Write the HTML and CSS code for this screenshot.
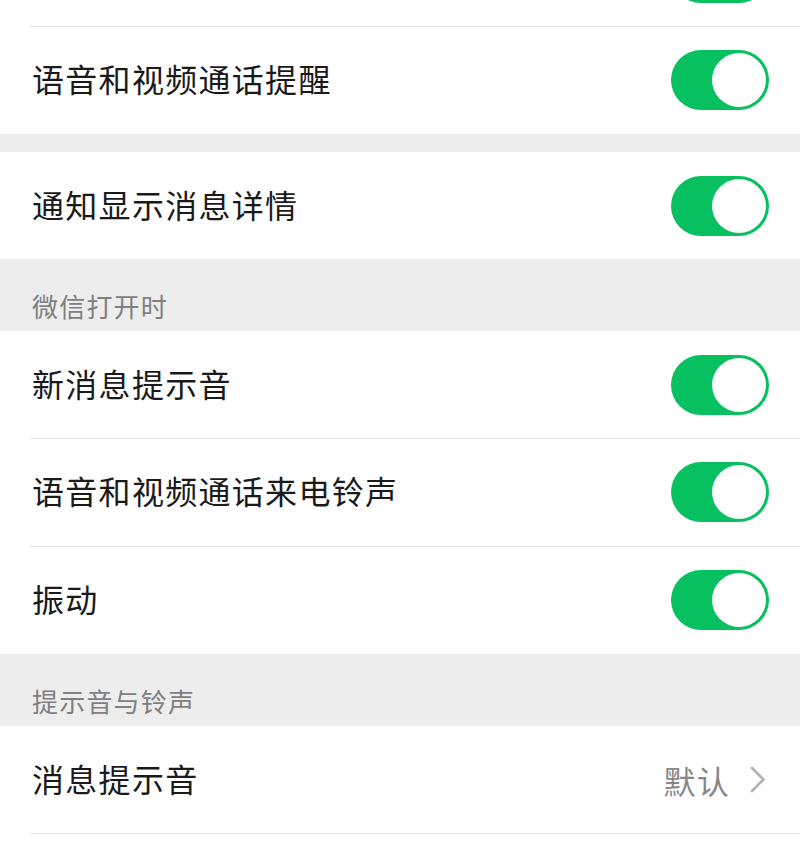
FILE: index.html
```
<!DOCTYPE html>
<html lang="zh-CN">
<head>
<meta charset="utf-8">
<title>新消息通知</title>
<link rel="stylesheet" href="styles.css">
</head>
<body>
<div class="page">
  <div class="group">
    <div class="row"><span class="label"></span><span class="switch"><span class="knob"></span></span></div>
    <div class="row"><span class="label">语音和视频通话提醒</span><span class="switch"><span class="knob"></span></span></div>
  </div>
  <div class="gap"></div>
  <div class="group">
    <div class="row"><span class="label">通知显示消息详情</span><span class="switch"><span class="knob"></span></span></div>
  </div>
  <div class="header">微信打开时</div>
  <div class="group">
    <div class="row"><span class="label">新消息提示音</span><span class="switch"><span class="knob"></span></span></div>
    <div class="row"><span class="label">语音和视频通话来电铃声</span><span class="switch"><span class="knob"></span></span></div>
    <div class="row"><span class="label">振动</span><span class="switch"><span class="knob"></span></span></div>
  </div>
  <div class="header">提示音与铃声</div>
  <div class="group">
    <div class="row"><span class="label">消息提示音</span><span class="value">默认<svg class="chev" width="16" height="27" viewBox="0 0 16 27"><path d="M2 2 L13.5 13.5 L2 25" fill="none" stroke="#b2b2b2" stroke-width="2.6" stroke-linecap="round" stroke-linejoin="round"/></svg></span></div>
    <div class="row row-tail"></div>
  </div>
</div>
</body>
</html>
```
FILE: styles.css
```
html, body {
  margin: 0;
  padding: 0;
  background: #ffffff;
  overflow: hidden;
}
body {
  font-family: "Noto Sans CJK SC", "Noto Sans", sans-serif;
  width: 800px;
  height: 853px;
}
.page {
  margin-top: -81px;
  background: #ededed;
}
.group {
  background: #ffffff;
}
.row {
  height: 107px;
  display: flex;
  align-items: center;
  justify-content: space-between;
  padding: 0 31px 0 32px;
  position: relative;
  box-sizing: border-box;
}
.group .row + .row {
  height: 108px;
}
.group .row + .row::after {
  content: "";
  position: absolute;
  left: 30px;
  right: 0;
  top: 0;
  height: 1px;
  background: #e3e3e3;
}
.group .row.row-tail {
  height: 19px;
}
.label {
  font-size: 32px;
  color: #1a1a1a;
  letter-spacing: 1.3px;
  position: relative;
  top: -2px;
}
.gap {
  height: 18px;
}
.header {
  height: 72px;
  box-sizing: border-box;
  padding: 21px 32px 0 32px;
  display: flex;
  align-items: center;
  font-size: 26px;
  color: #7f7f7f;
  letter-spacing: 1.2px;
}
.switch {
  width: 98px;
  height: 60px;
  border-radius: 30px;
  background: #07c160;
  display: flex;
  align-items: center;
  justify-content: flex-end;
  padding-right: 3px;
  box-sizing: border-box;
}
.knob {
  width: 54px;
  height: 54px;
  border-radius: 50%;
  background: #ffffff;
}
.value {
  display: flex;
  align-items: center;
  font-size: 32px;
  color: #888888;
  gap: 20px;
  margin-right: 3px;
  letter-spacing: 1.3px;
}
.chev {
  display: block;
}
```
